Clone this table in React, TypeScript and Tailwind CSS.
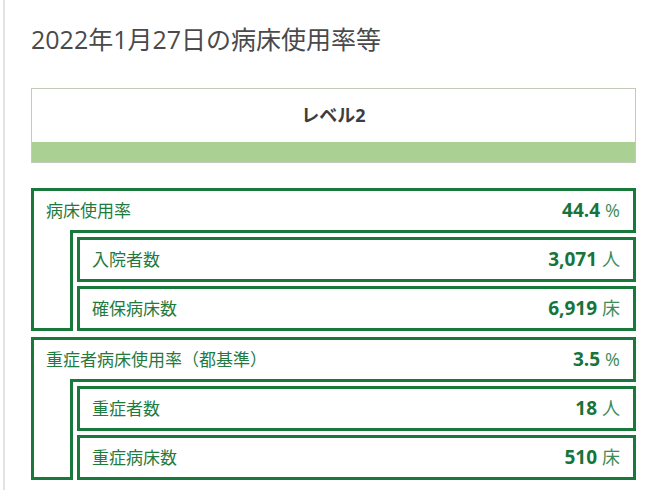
const font = { fontFamily: '"Open Sans", "Noto Sans CJK JP", sans-serif' }

type Row = { label: string; value: string; unit: string }

const groups: { head: Row; items: Row[] }[] = [
  {
    head: { label: '病床使用率', value: '44.4', unit: '%' },
    items: [
      { label: '入院者数', value: '3,071', unit: '人' },
      { label: '確保病床数', value: '6,919', unit: '床' },
    ],
  },
  {
    head: { label: '重症者病床使用率（都基準）', value: '3.5', unit: '%' },
    items: [
      { label: '重症者数', value: '18', unit: '人' },
      { label: '重症病床数', value: '510', unit: '床' },
    ],
  },
]

function Content({ row }: { row: Row }) {
  return (
    <div className="flex h-[39px] items-center justify-between pl-3 pr-[13px] text-[#1f7a3e]">
      <span className="text-[17px]">{row.label}</span>
      <span className="flex items-baseline gap-[5px]">
        <span className="text-[19px] font-bold text-[#17743a]">{row.value}</span>
        <span className="text-[18px] text-[#3f8c58]">{row.unit}</span>
      </span>
    </div>
  )
}

function Group({ head, items }: { head: Row; items: Row[] }) {
  return (
    <div className="flex flex-col">
      <div className="border-[3px] border-b-0 border-[#18793a]">
        <Content row={head} />
      </div>
      <div className="flex">
        <div className="w-[39px] border-b-[3px] border-l-[3px] border-[#18793a]" />
        <div className="flex flex-1 flex-col gap-[4px] border-l-[3px] border-t-[3px] border-[#18793a] pl-[4px] pt-[4px]">
          {items.map((item) => (
            <div key={item.label} className="border-[3px] border-[#18793a]">
              <Content row={item} />
            </div>
          ))}
        </div>
      </div>
    </div>
  )
}

export default function App() {
  return (
    <div className="flex h-[490px] w-[654px] overflow-hidden bg-white" style={font}>
      <div className="ml-[3px] w-[2px] bg-[#e2e2e2]" />
      <div className="w-[631px] shrink-0 pl-[26px]">
        <h1 className="mt-[24px] h-[30px] text-[25px] leading-[30px] text-[#4a4a4a]">2022年1月27日の病床使用率等</h1>
        <div className="mt-[34px] border border-[#c2cbb8] bg-white">
          <div className="flex h-[53px] items-center justify-center text-[18px] font-bold text-[#3d3d3d]">レベル2</div>
          <div className="h-[20px] bg-[#abd093]" />
        </div>
        <div className="mt-[25px] flex flex-col gap-[6px]">
          {groups.map((g) => (
            <Group key={g.head.label} head={g.head} items={g.items} />
          ))}
        </div>
      </div>
    </div>
  )
}
